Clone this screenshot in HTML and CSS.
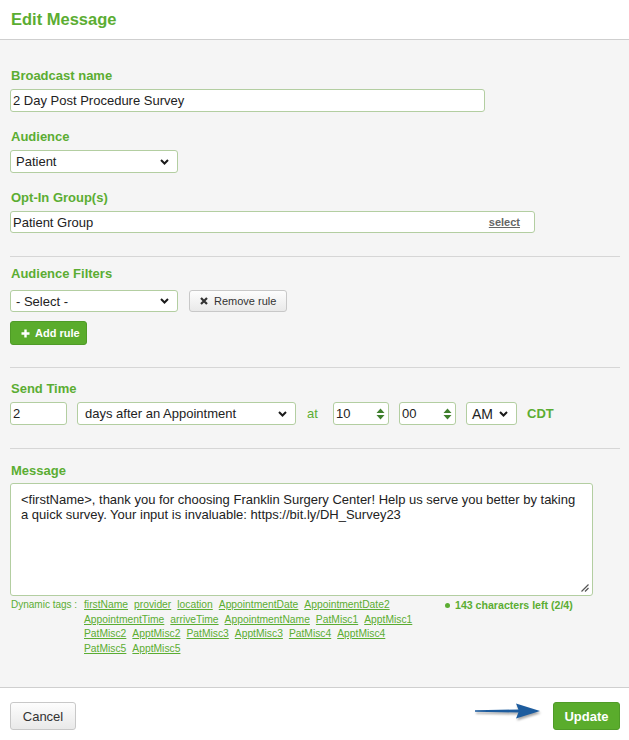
FILE: index.html
```html
<!DOCTYPE html>
<html>
<head>
<meta charset="utf-8">
<title>Edit Message</title>
<link rel="stylesheet" href="styles.css">
</head>
<body>
<div class="modal">
  <header class="head"><h1 class="title">Edit Message</h1></header>
  <main class="content">
    <div class="field">
      <div class="label">Broadcast name</div>
      <div class="input w-name">2 Day Post Procedure Survey</div>
    </div>
    <div class="field">
      <div class="label">Audience</div>
      <div class="input select w-aud"><span>Patient</span>
        <svg class="chev" width="9" height="6" viewBox="0 0 9 6"><path d="M1 1 L4.5 4.5 L8 1" fill="none" stroke="#1a1a1a" stroke-width="2"/></svg></div>
    </div>
    <div class="field">
      <div class="label">Opt-In Group(s)</div>
      <div class="input optin"><span>Patient Group</span><a class="pick">select</a></div>
    </div>
    <div class="divider d1"></div>
    <div class="label lf">Audience Filters</div>
    <div class="filter-row">
      <div class="input select w-aud sel2"><span>- Select -</span>
        <svg class="chev" width="9" height="6" viewBox="0 0 9 6"><path d="M1 1 L4.5 4.5 L8 1" fill="none" stroke="#1a1a1a" stroke-width="2"/></svg></div>
      <button class="btn-grey rm"><svg width="8" height="8" viewBox="0 0 8 8"><path d="M1 1 L7 7 M7 1 L1 7" stroke="#333" stroke-width="2.2"/></svg>Remove rule</button>
    </div>
    <button class="btn-green add"><svg width="9" height="9" viewBox="0 0 9 9"><path d="M4.5 0.5 V8.5 M0.5 4.5 H8.5" stroke="#fff" stroke-width="2.4"/></svg>Add rule</button>
    <div class="divider d2"></div>
    <div class="label ls">Send Time</div>
    <div class="time-row">
      <div class="input w-num">2</div>
      <div class="input select w-days"><span>days after an Appointment</span>
        <svg class="chev" width="9" height="6" viewBox="0 0 9 6"><path d="M1 1 L4.5 4.5 L8 1" fill="none" stroke="#1a1a1a" stroke-width="2"/></svg></div>
      <span class="at">at</span>
      <div class="input spin w-hr"><span>10</span>
        <svg width="9" height="14" viewBox="0 0 9 14"><path d="M0.5 6 L4.5 1.5 L8.5 6 Z M0.5 8 L4.5 12.5 L8.5 8 Z" fill="#3f7f2d"/></svg></div>
      <div class="input spin w-min"><span>00</span>
        <svg width="9" height="14" viewBox="0 0 9 14"><path d="M0.5 6 L4.5 1.5 L8.5 6 Z M0.5 8 L4.5 12.5 L8.5 8 Z" fill="#3f7f2d"/></svg></div>
      <div class="input select w-ampm"><span>AM</span>
        <svg class="chev" width="9" height="6" viewBox="0 0 9 6"><path d="M1 1 L4.5 4.5 L8 1" fill="none" stroke="#1a1a1a" stroke-width="2"/></svg></div>
      <span class="cdt">CDT</span>
    </div>
    <div class="divider d3"></div>
    <div class="label lm">Message</div>
    <div class="textarea">
      &lt;firstName&gt;, thank you for choosing Franklin Surgery Center! Help us serve you better by taking<br>a quick survey. Your input is invaluable: https://bit.ly/DH_Survey23
      <svg class="grip" width="9" height="9" viewBox="0 0 9 9"><path d="M8.5 1.5 L1.5 8.5 M8.5 5 L5 8.5" stroke="#555" stroke-width="1.2"/></svg>
    </div>
    <div class="tags">
      <div class="tags-label">Dynamic tags :</div>
      <div class="tag-list">
        <div class="tag-line"><a>firstName</a><a>provider</a><a>location</a><a>AppointmentDate</a><a>AppointmentDate2</a></div>
        <div class="tag-line"><a>AppointmentTime</a><a>arriveTime</a><a>AppointmentName</a><a>PatMisc1</a><a>ApptMisc1</a></div>
        <div class="tag-line"><a>PatMisc2</a><a>ApptMisc2</a><a>PatMisc3</a><a>ApptMisc3</a><a>PatMisc4</a><a>ApptMisc4</a></div>
        <div class="tag-line"><a>PatMisc5</a><a>ApptMisc5</a></div>
      </div>
      <div class="chars"><span class="dot"></span>143 characters left (2/4)</div>
    </div>
  </main>
  <footer class="foot">
    <button class="btn-grey cancel">Cancel</button>
    <div class="foot-right">
      <svg class="arrow" width="70" height="20" viewBox="0 0 70 20">
        <path d="M2 9.2 L46 8.4 L46 11.6 L2 10.8 Z" fill="#1d5c9e"/>
        <path d="M43 2.5 L67 10 L43 17.5 L46 10 Z" fill="#1d5c9e"/>
      </svg>
      <button class="btn-green update">Update</button>
    </div>
  </footer>
</div>
</body>
</html>
```

FILE: styles.css
```css
body {
  margin: 0;
  font-family: "Liberation Sans", Arial, sans-serif;
  background: #fff;
}
.modal {
  width: 629px;
  height: 740px;
  display: flex;
  flex-direction: column;
}
.head {
  height: 39px;
  flex: none;
  border-bottom: 1px solid #cfcfcf;
  display: flex;
  align-items: center;
  padding-left: 11px;
  box-sizing: content-box;
}
.title {
  margin: 0;
  font-size: 16.5px;
  font-weight: bold;
  color: #5bad32;
}
.content {
  flex: 1;
  background: #f5f5f5;
  padding: 28px 9px 0 10px;
}
.label {
  font-size: 13px;
  line-height: 15px;
  font-weight: bold;
  color: #5bad32;
  margin: 0 0 6px 1px;
}
.field + .field { margin-top: 17px; }
.input {
  box-sizing: border-box;
  height: 23px;
  border: 1px solid #b3cea1;
  border-radius: 3px;
  background: #fff;
  font-size: 13px;
  color: #222;
  padding: 0 2px;
  display: flex;
  align-items: center;
}
.w-name { width: 475px; }
.select { justify-content: space-between; padding: 0 8px 0 5px; }
.w-aud { width: 168px; }
.optin { width: 525px; height: 22px; justify-content: space-between; padding-right: 14px; }
.pick {
  font-size: 11px;
  font-weight: bold;
  color: #666;
  text-decoration: underline;
}
.divider { height: 1px; background: #d6d6d6; }
.d1 { margin: 23px 0 9px; }
.lf { margin-bottom: 9px; }
.filter-row { display: flex; gap: 11px; }
.sel2 { height: 22px; }
.btn-grey {
  box-sizing: border-box;
  border: 1px solid #c8c8c8;
  border-radius: 3px;
  background: linear-gradient(#fdfdfd, #e9e9e9);
  color: #333;
  font-family: inherit;
  display: flex;
  align-items: center;
  cursor: pointer;
}
.rm {
  width: 98px;
  height: 22px;
  font-size: 11px;
  padding: 0 0 0 10px;
  gap: 6px;
}
.btn-green {
  box-sizing: border-box;
  border: 1px solid #4f9b27;
  border-radius: 3px;
  background: #5aac2c;
  color: #fff;
  font-family: inherit;
  font-weight: bold;
  display: flex;
  align-items: center;
  cursor: pointer;
}
.add {
  margin-top: 9px;
  width: 77px;
  height: 24px;
  font-size: 11px;
  padding: 0 0 0 10px;
  gap: 5px;
}
.d2 { margin: 22px 0 13px; }
.ls { margin-bottom: 6px; }
.time-row { display: flex; align-items: center; }
.w-num { width: 57px; }
.w-days { width: 219px; margin-left: 10px; padding-left: 7px; }
.at { font-size: 13px; color: #5bad32; margin-left: 11px; width: 26px; }
.spin { justify-content: space-between; padding: 0 3px 0 2px; }
.w-hr { width: 56px; }
.w-min { width: 57px; margin-left: 10px; }
.w-ampm { width: 51px; margin-left: 10px; padding-left: 5px; font-size: 14px; }
.cdt { font-size: 13px; font-weight: bold; color: #5bad32; margin-left: 10px; }
.d3 { margin: 23px 0 14px; }
.lm { margin-bottom: 5px; }
.textarea {
  position: relative;
  box-sizing: border-box;
  width: 583px;
  height: 113px;
  border: 1px solid #b3cea1;
  border-radius: 3px;
  background: #fff;
  padding: 8px 10px;
  font-size: 13px;
  line-height: 15px;
  color: #222;
}
.grip { position: absolute; right: 3px; bottom: 3px; }
.tags {
  margin-top: 2px;
  display: grid;
  grid-template-columns: 74px 361px auto;
  font-size: 10px;
  line-height: 14.5px;
  color: #5bad32;
}
.tags-label { padding-left: 1px; }
.tag-line { display: flex; gap: 6px; font-size: 10.3px; }
.tag-line a { color: #5bad32; text-decoration: underline; }
.chars {
  font-size: 10.6px;
  font-weight: bold;
  display: flex;
  align-items: center;
  gap: 5px;
  align-self: start;
}
.dot {
  width: 5px;
  height: 5px;
  border-radius: 50%;
  background: #5bad32;
}
.foot {
  flex: none;
  box-sizing: border-box;
  border-top: 1px solid #cfcfcf;
  height: 53px;
  padding: 14px 9px 0 10px;
  display: flex;
  justify-content: space-between;
  align-items: flex-start;
}
.cancel {
  width: 66px;
  height: 28px;
  font-size: 13px;
  justify-content: center;
}
.foot-right { display: flex; align-items: flex-start; }
.arrow {
  margin-top: -1px;
  margin-right: 10px;
  filter: drop-shadow(1px 2px 1px rgba(0,0,0,0.35));
}
.update {
  width: 67px;
  height: 28px;
  font-size: 13px;
  justify-content: center;
}
```
